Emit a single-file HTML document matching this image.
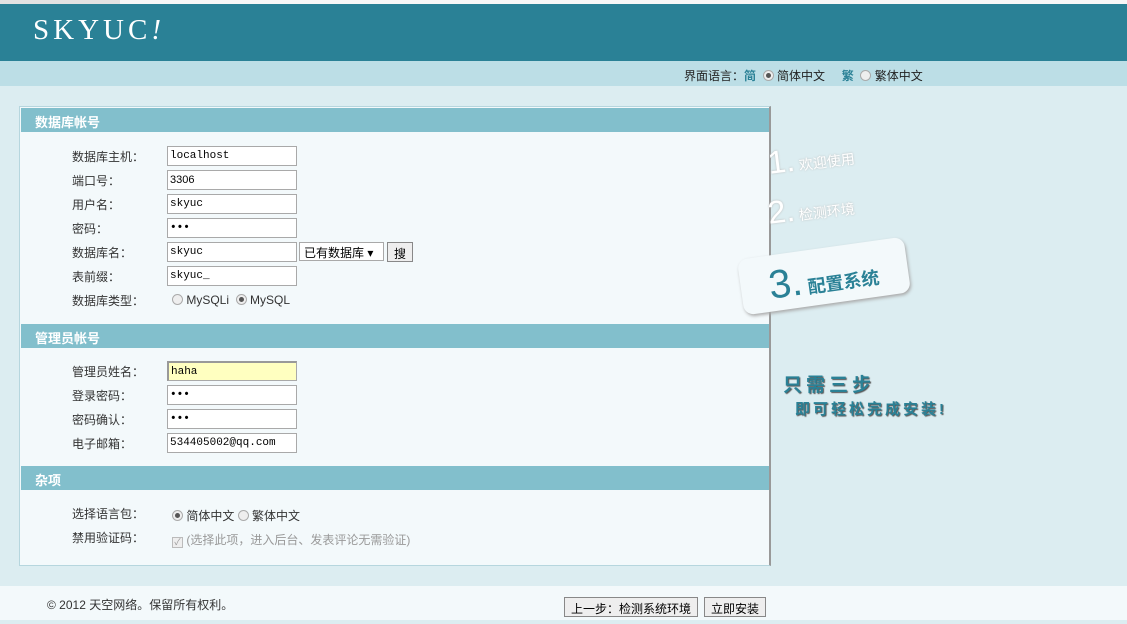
<!DOCTYPE html>
<html><head><meta charset="utf-8"><style>
*{margin:0;padding:0;box-sizing:border-box}
body{width:1127px;height:624px;overflow:hidden;background:#dcedf1;font-family:"Liberation Sans","Noto Sans CJK SC",sans-serif;font-size:12px;color:#333;position:relative}
.a{position:absolute}
.top{left:0;top:0;width:1127px;height:4px;background:#f7f7f7}
.hdr{left:0;top:4px;width:1127px;height:57px;background:#2a8196}
.logo{left:33px;top:14px;color:#fff;font-family:"Liberation Serif",serif;font-size:29px;letter-spacing:4px}
.sub{left:0;top:61px;width:1127px;height:25px;background:#bcdee6}
.panel{left:19px;top:106px;width:752px;height:460px;background:#f3f9fb;border:1px solid #b6d6de;border-right:2px solid #999}
.sec{left:21px;width:748px;height:24px;background:#82bfcc;color:#fff;font-weight:bold;font-size:13px;padding:4px 0 0 14px}
.lb{left:72px;font-size:12px;color:#333}
.in{left:167px;width:130px;height:20px;background:#fff;border:1px solid #a9a9a9;font-family:"Liberation Mono","Noto Sans CJK SC",monospace;font-size:11px;padding:3px 2px;color:#000}
.rad{display:inline-block;width:11px;height:11px;border-radius:50%;border:1px solid #aaa;background:#eee;vertical-align:-1px;position:relative}
.rad.on::after{content:"";position:absolute;left:2px;top:2px;width:5px;height:5px;border-radius:50%;background:#555}
.btn{height:20px;border:1px solid #888;background:#eee;font-size:12px;color:#000;padding:2px 6px;white-space:nowrap}
.foot{left:0;top:586px;width:1127px;height:34px;background:#f3f9fb}
</style></head><body>
<div class="a top"></div>
<div class="a" style="left:0;top:0;width:120px;height:4px;background:#e2e2e2"></div>
<div class="a hdr"></div>
<div class="a logo">SKYUC<i>!</i></div>
<div class="a sub"></div>
<div class="a" style="left:684px;top:67px;font-size:12px;color:#222">界面语言：<span style="color:#2a8196;font-weight:bold">简</span> &nbsp;<span class="rad on"></span> 简体中文 &nbsp;&nbsp;&nbsp; <span style="color:#2a8196;font-weight:bold">繁</span> &nbsp;<span class="rad"></span> 繁体中文</div>

<div class="a panel"></div>
<div class="a sec" style="top:108px">数据库帐号</div>
<div class="a lb" style="top:148px">数据库主机：</div><div class="a in" style="top:146px">localhost</div>
<div class="a lb" style="top:172px">端口号：</div><div class="a in" style="top:170px;font-family:'Liberation Sans',sans-serif">3306</div>
<div class="a lb" style="top:196px">用户名：</div><div class="a in" style="top:194px">skyuc</div>
<div class="a lb" style="top:220px">密码：</div><div class="a in" style="top:218px;font-weight:bold">•••</div>
<div class="a lb" style="top:244px">数据库名：</div><div class="a in" style="top:242px">skyuc</div>
<div class="a" style="left:299px;top:242px;width:85px;height:19px;border:1px solid #a9a9a9;background:#fff;font-size:12px;padding:1px 4px;color:#000">已有数据库 ▾</div>
<div class="a btn" style="left:387px;top:242px">搜</div>
<div class="a lb" style="top:268px">表前缀：</div><div class="a in" style="top:266px">skyuc_</div>
<div class="a lb" style="top:292px">数据库类型：</div>
<div class="a" style="left:172px;top:293px;color:#333"><span class="rad"></span> MySQLi &nbsp;<span class="rad on"></span> MySQL</div>

<div class="a sec" style="top:324px">管理员帐号</div>
<div class="a lb" style="top:363px">管理员姓名：</div><div class="a in" style="top:361px;background:#ffffc0;border-top:2px solid #999;border-left:2px solid #999">haha</div>
<div class="a lb" style="top:387px">登录密码：</div><div class="a in" style="top:385px;font-weight:bold">•••</div>
<div class="a lb" style="top:411px">密码确认：</div><div class="a in" style="top:409px;font-weight:bold">•••</div>
<div class="a lb" style="top:435px">电子邮箱：</div><div class="a in" style="top:433px">534405002@qq.com</div>

<div class="a sec" style="top:466px">杂项</div>
<div class="a lb" style="top:505px">选择语言包：</div>
<div class="a" style="left:172px;top:507px;color:#333"><span class="rad on"></span> 简体中文 <span class="rad"></span> 繁体中文</div>
<div class="a lb" style="top:529px">禁用验证码：</div>
<div class="a" style="left:172px;top:531px;color:#999"><span style="display:inline-block;width:11px;height:11px;border:1px solid #bbb;background:#eee;font-size:9px;line-height:9px;text-align:center;vertical-align:-1px">✓</span> (选择此项，进入后台、发表评论无需验证)</div>

<div class="a" style="left:768px;top:145px;color:#fff;font-size:32px;transform:rotate(-7deg);transform-origin:left;text-shadow:0 0 2px #bbb">1.<span style="font-size:14px"> 欢迎使用</span></div>
<div class="a" style="left:768px;top:195px;color:#fff;font-size:32px;transform:rotate(-7deg);transform-origin:left;text-shadow:0 0 2px #bbb">2.<span style="font-size:14px"> 检测环境</span></div>
<div class="a" style="left:740px;top:248px;width:168px;height:56px;background:#f3f9fb;border-radius:10px;transform:rotate(-8deg);box-shadow:1px 2px 3px #aaa"></div>
<div class="a" style="left:769px;top:264px;color:#2a8196;font-size:40px;transform:rotate(-8deg);transform-origin:left">3.<span style="font-size:18px;font-weight:bold"> 配置系统</span></div>
<div class="a" style="left:783px;top:370px;color:#2a8196;font-size:19px;font-weight:bold;letter-spacing:4px;text-shadow:1px 1px 1px #555">只需三步</div>
<div class="a" style="left:795px;top:398px;color:#2a8196;font-size:15px;font-weight:bold;letter-spacing:3px;text-shadow:1px 1px 1px #555">即可轻松完成安装!</div>

<div class="a foot"></div>
<div class="a" style="left:47px;top:596px;color:#333">© 2012 天空网络。保留所有权利。</div>
<div class="a btn" style="left:564px;top:597px">上一步：检测系统环境</div>
<div class="a btn" style="left:704px;top:597px">立即安装</div>
</body></html>
